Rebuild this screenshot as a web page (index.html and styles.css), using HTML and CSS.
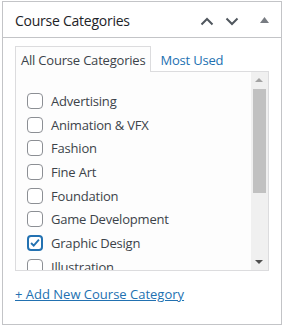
FILE: index.html
```html
<!DOCTYPE html>
<html>
<head>
<meta charset="utf-8">
<link rel="stylesheet" href="styles.css">
</head>
<body>
<div class="postbox">
  <div class="postbox-header">
    <h2 class="hndle">Course Categories</h2>
    <div class="handle-actions">
      <span class="hbtn">
        <svg width="14" height="9" viewBox="0 0 14 9"><path d="M1.5 7.5 L7 2 L12.5 7.5" fill="none" stroke="#50575e" stroke-width="2"/></svg>
      </span>
      <span class="hbtn down">
        <svg width="14" height="9" viewBox="0 0 14 9"><path d="M1.5 1.5 L7 7 L12.5 1.5" fill="none" stroke="#50575e" stroke-width="2"/></svg>
      </span>
      <span class="hbtn toggle">
        <svg width="9" height="6" viewBox="0 0 9 6"><path d="M0 6 L4.5 0 L9 6 Z" fill="#787c82"/></svg>
      </span>
    </div>
  </div>
  <div class="inside">
    <ul class="tabs">
      <li class="tab active">All Course Categories</li>
      <li class="tab link">Most Used</li>
    </ul>
    <div class="tabs-panel">
      <ul class="checklist">
        <li><span class="cb"></span>Advertising</li>
        <li><span class="cb"></span>Animation &amp; VFX</li>
        <li><span class="cb"></span>Fashion</li>
        <li><span class="cb"></span>Fine Art</li>
        <li><span class="cb"></span>Foundation</li>
        <li><span class="cb"></span>Game Development</li>
        <li><span class="cb checked"><svg width="14" height="14" viewBox="0 0 14 14"><path d="M2.4 7 L5.5 10.1 L11.6 3.2" fill="none" stroke="#2271b1" stroke-width="2.2"/></svg></span>Graphic Design</li>
        <li><span class="cb"></span>Illustration</li>
      </ul>
      <div class="scrollbar">
        <span class="arrow up"></span>
        <span class="thumb"></span>
        <span class="spacer"></span>
        <span class="arrow down"></span>
      </div>
    </div>
    <div class="adder"><a class="add-link">+ Add New Course Category</a></div>
  </div>
</div>
</body>
</html>
```
FILE: styles.css
```css
html, body {
  margin: 0;
  padding: 0;
  background: #fff;
}
body {
  padding: 1px 2px 0 2px;
  font-family: "Open Sans", "Noto Sans", sans-serif;
  font-size: 13px;
  letter-spacing: -0.2px;
  color: #3c434a;
}
.postbox {
  width: 278px;
  height: 322px;
  border: 1px solid #c3c4c7;
  background: #fff;
}
.postbox-header {
  display: flex;
  align-items: center;
  justify-content: space-between;
  height: 35px;
  border-bottom: 1px solid #c3c4c7;
}
.hndle {
  margin: 0;
  padding: 1px 0 0 12px;
  font-size: 14px;
  font-weight: 400;
  letter-spacing: -0.25px;
  color: #1d2327;
}
.handle-actions {
  display: flex;
  align-items: center;
  padding-top: 3px;
}
.hbtn {
  display: flex;
  align-items: center;
  justify-content: center;
  width: 25px;
  height: 20px;
}
.hbtn.down {
  margin-right: 4px;
}
.hbtn.toggle {
  width: 33px;
  padding-bottom: 2px;
}
.inside {
  padding: 8px 12px 0 12px;
}
.tabs {
  display: flex;
  list-style: none;
  margin: 0;
  padding: 0;
  height: 26px;
  position: relative;
  z-index: 1;
}
.tab {
  padding: 1px 5px 0 5px;
  line-height: 25px;
  height: 25px;
  border: 1px solid transparent;
  border-bottom: none;
  box-sizing: border-box;
}
.tab.active {
  border-color: #dcdcde;
  background: #fdfdfd;
  height: 26px;
  color: #3c434a;
}
.tab.link {
  color: #2271b1;
  padding-left: 8px;
}
.tabs-panel {
  display: flex;
  height: 198px;
  border: 1px solid #dcdcde;
  background: #fdfdfd;
  overflow: hidden;
  margin-top: -1px;
}
.checklist {
  flex: 1;
  list-style: none;
  margin: 0;
  padding: 17px 0 0 11px;
}
.checklist li {
  display: flex;
  align-items: center;
  height: 23.7px;
  white-space: nowrap;
}
.cb {
  box-sizing: border-box;
  width: 16px;
  height: 16px;
  border: 1px solid #8c8f94;
  border-radius: 4px;
  background: #fff;
  margin-right: 8px;
  flex: none;
  display: flex;
  align-items: center;
  justify-content: center;
}
.cb.checked {
  border: 2px solid #2271b1;
}
.scrollbar {
  width: 17px;
  flex: none;
  background: #f0f0f0;
  display: flex;
  flex-direction: column;
  align-items: center;
}
.arrow {
  height: 17px;
  width: 17px;
  flex: none;
  position: relative;
}
.arrow::after {
  content: "";
  position: absolute;
  left: 4px;
  border-left: 4px solid transparent;
  border-right: 4px solid transparent;
}
.arrow.up::after {
  top: 6px;
  border-bottom: 4px solid #a3a3a3;
}
.arrow.down::after {
  top: 7px;
  border-top: 4px solid #505050;
}
.thumb {
  width: 13px;
  height: 104px;
  background: #c1c1c1;
  flex: none;
}
.spacer {
  flex: 1;
}
.adder {
  padding-top: 14px;
}
.add-link {
  color: #2271b1;
  text-decoration: underline;
  font-size: 13px;
  letter-spacing: 0;
}
```
